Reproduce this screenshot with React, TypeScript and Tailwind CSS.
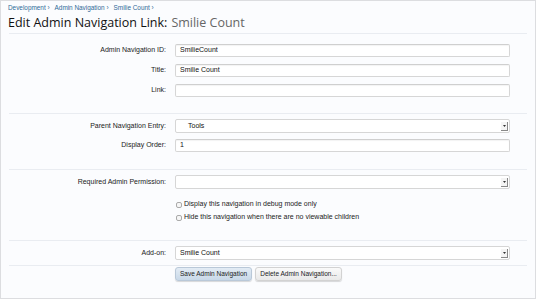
import React from 'react'

const font = { fontFamily: '"Liberation Sans", Arial, sans-serif' }

function Row({ label, children }: { label: string; children: React.ReactNode }) {
  return (
    <div className="flex items-center">
      <div className="w-[166px] shrink-0 pr-[1px] text-right text-[7px] text-[#222]">{label}</div>
      <div className="ml-[8px] w-[335px]">{children}</div>
    </div>
  )
}

function TextBox({ value = '' }: { value?: string }) {
  return (
    <div className="flex h-[13px] items-center rounded-[2px] border border-[#d6d6d6] border-t-[#cfcfcf] bg-white px-[4px] text-[7px] text-[#111] shadow-[inset_0_1px_1px_rgba(0,0,0,0.05)]">
      {value}
    </div>
  )
}

function SelectBox({ value = '', indent = false }: { value?: string; indent?: boolean }) {
  return (
    <div className="flex h-[14px] items-center rounded-[2px] border border-[#d6d6d6] bg-white pl-[4px] pr-[1px] text-[7px] text-[#111]">
      <span className={indent ? 'pl-[8px]' : ''}>{value}</span>
      <span className="ml-auto flex h-[9px] w-[7px] items-center justify-center border-r border-b border-[#888] bg-[#f4f4f4]">
        <svg width="3" height="2" viewBox="0 0 3 2"><path d="M0 0h3L1.5 2z" fill="#333" /></svg>
      </span>
    </div>
  )
}

function Check({ label }: { label: string }) {
  return (
    <div className="flex h-[13px] items-center gap-[2px] text-[7px] text-[#222]">
      <span className="h-[6px] w-[6px] rounded-[2px] border border-[#aaa] bg-[#f6f6f6]" />
      {label}
    </div>
  )
}

export default function App() {
  return (
    <div style={font} className="h-[299px] w-[536px] overflow-hidden border border-[#dcdde0] bg-[#fbfcfe]">
      <div className="px-[7px]">
        <div className="flex h-[13px] items-center gap-[5px] pt-[1px] text-[6.4px] text-[#2f6a98]">
          <span>Development ›</span>
          <span>Admin Navigation ›</span>
          <span>Smilie Count ›</span>
        </div>
        <h1 className="flex h-[18px] items-center text-[12.5px] leading-none text-[#111]" style={{ fontFamily: '"Open Sans", "DejaVu Sans", sans-serif' }}>
          Edit Admin Navigation Link:<span className="ml-[4px] text-[#666]">Smilie Count</span>
        </h1>
      </div>

      <div className="mx-[8px] border-b border-[#e9ecf1] pt-[1px]" />

      <div className="mx-[8px] border-b border-[#e9ecf1] pt-[10px] pb-[16px]">
        <div className="-ml-[8px] flex flex-col gap-[7px]">
          <Row label="Admin Navigation ID:"><TextBox value="SmilieCount" /></Row>
          <Row label="Title:"><TextBox value="Smilie Count" /></Row>
          <Row label="Link:"><TextBox /></Row>
        </div>
      </div>

      <div className="mx-[8px] border-b border-[#e9ecf1] pt-[5px] pb-[17px]">
        <div className="-ml-[8px] flex flex-col gap-[6px]">
          <Row label="Parent Navigation Entry:"><SelectBox value="Tools" indent /></Row>
          <Row label="Display Order:"><TextBox value="1" /></Row>
        </div>
      </div>

      <div className="mx-[8px] border-b border-[#e9ecf1] pt-[5px] pb-[16px]">
        <div className="-ml-[8px]">
          <Row label="Required Admin Permission:"><SelectBox /></Row>
          <div className="mt-[9px] ml-[175px] flex flex-col">
            <Check label="Display this navigation in debug mode only" />
            <Check label="Hide this navigation when there are no viewable children" />
          </div>
        </div>
      </div>

      <div className="mx-[8px] border-b border-[#e9ecf1] pt-[5px] pb-[5px]">
        <div className="-ml-[8px]">
          <Row label="Add-on:"><SelectBox value="Smilie Count" /></Row>
        </div>
      </div>

      <div className="flex gap-[3px] pt-[1px] pl-[174px]">
        <button className="h-[14px] rounded-[3px] border border-[#b9c8d8] bg-gradient-to-b from-[#e3ecf5] to-[#c8d8e8] px-[4px] text-[6.5px] text-[#222] shadow-[0_1px_1px_rgba(0,0,0,0.15)]">
          Save Admin Navigation
        </button>
        <button className="h-[14px] rounded-[3px] border border-[#d2d2d2] bg-gradient-to-b from-[#fafafa] to-[#e9e9e9] px-[4px] text-[6.5px] text-[#222] shadow-[0_1px_1px_rgba(0,0,0,0.15)]">
          Delete Admin Navigation...
        </button>
      </div>
    </div>
  )
}
